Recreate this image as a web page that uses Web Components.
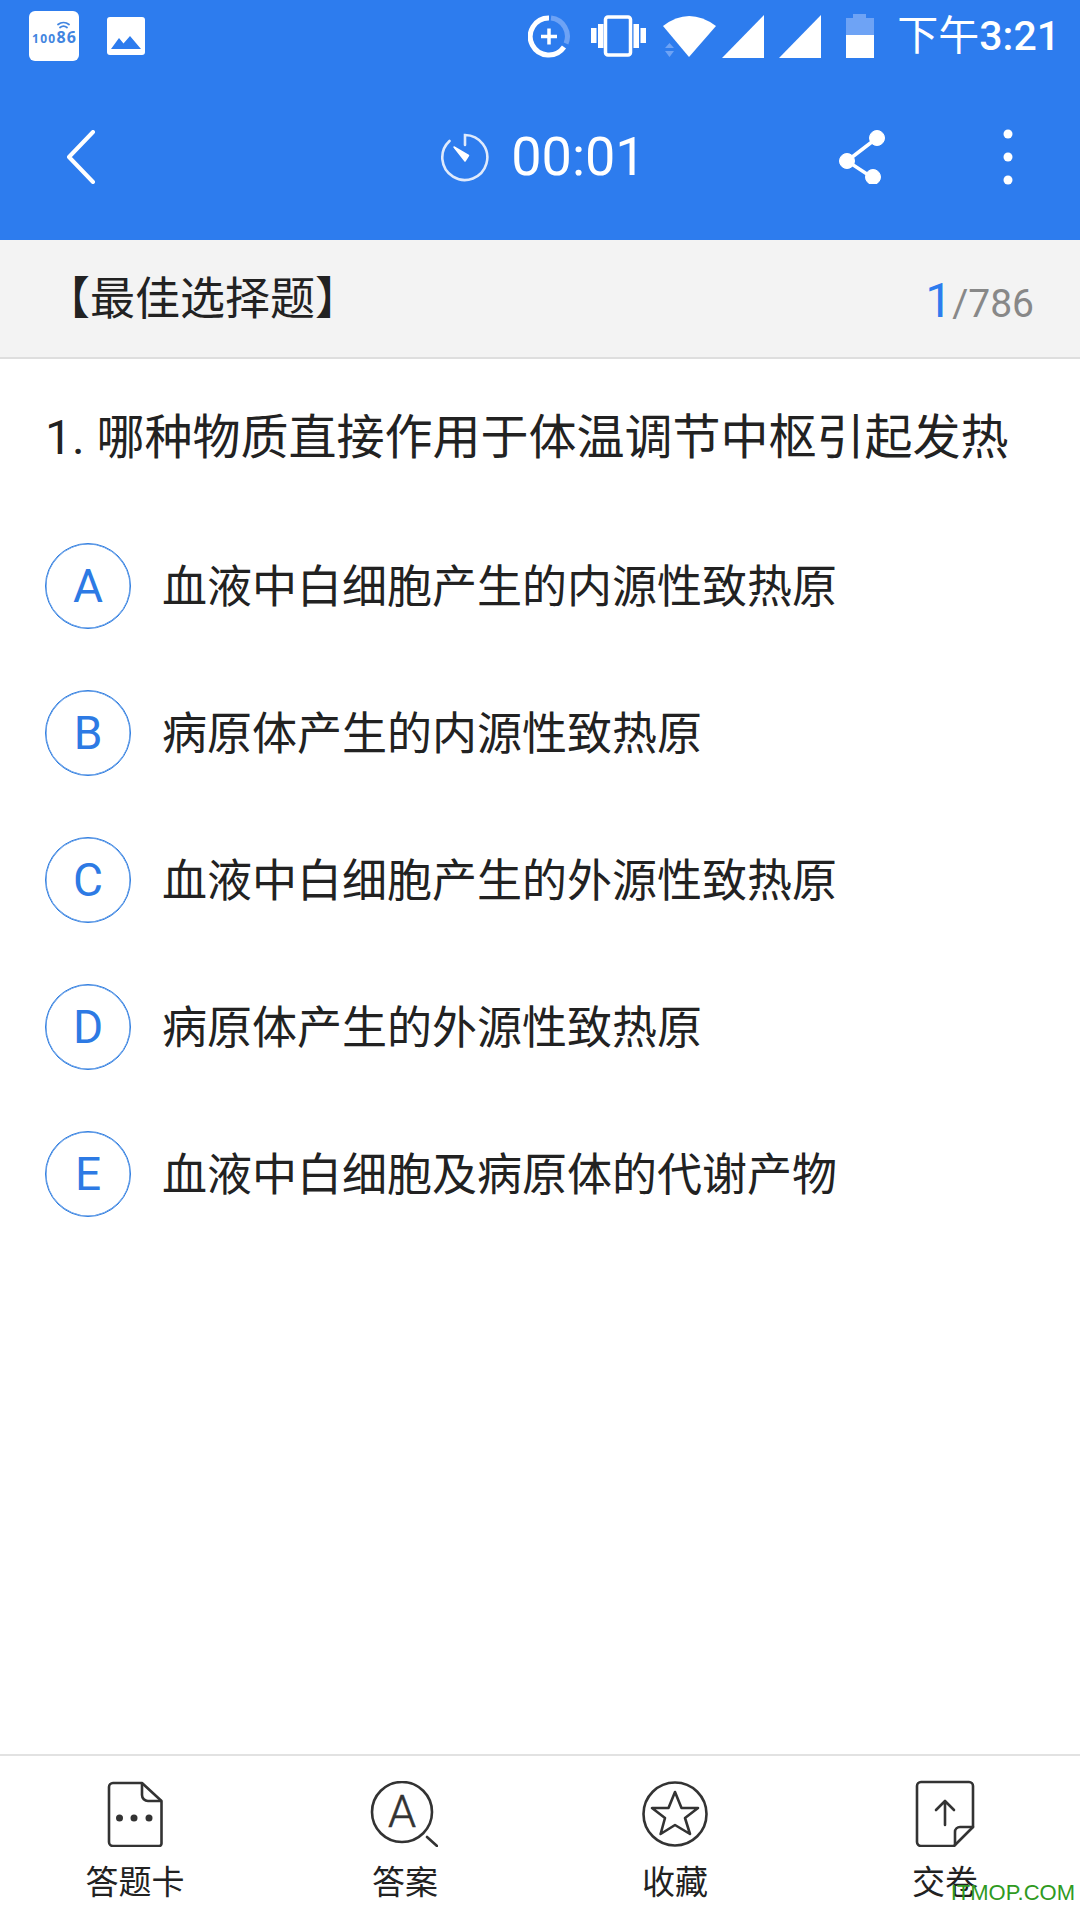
<!DOCTYPE html>
<html lang="zh-CN">
<head>
<meta charset="utf-8">
<title>最佳选择题</title>
<style>
    html, body { margin: 0; padding: 0; background: #fff; }
    body { font-family: Roboto, "Noto Sans CJK SC", sans-serif; color: #222; }
</style>
</head>
<body>
<exam-page>
    <status-bar></status-bar>
    <exam-toolbar time="00:01"></exam-toolbar>
    <section-head current="1" total="/786">【最佳选择题】</section-head>
    <question-block>
        <span slot="question">1. 哪种物质直接作用于体温调节中枢引起发热</span>
        <answer-option letter="A">血液中白细胞产生的内源性致热原</answer-option>
        <answer-option letter="B">病原体产生的内源性致热原</answer-option>
        <answer-option letter="C">血液中白细胞产生的外源性致热原</answer-option>
        <answer-option letter="D">病原体产生的外源性致热原</answer-option>
        <answer-option letter="E">血液中白细胞及病原体的代谢产物</answer-option>
    </question-block>
    <bottom-bar>
        <bottom-tab>
            <svg slot="icon" width="56" height="66" viewBox="0 0 56 66" fill="none" stroke="#333" stroke-width="2.6" stroke-linejoin="round">
                <path d="M35 2H6a4 4 0 0 0-4 4v55a4 4 0 0 0 4 4h46a2.500 2.500 0 0 0 2.500-2.500V20Z"/>
                <path d="M35 2v12a6 6 0 0 0 6 6h13.500"/>
                <circle cx="12.500" cy="37" r="3.500" fill="#333" stroke="none"/>
                <circle cx="27" cy="37" r="3.500" fill="#333" stroke="none"/>
                <circle cx="42" cy="37" r="3.500" fill="#333" stroke="none"/>
            </svg>
            答题卡
        </bottom-tab>
        <bottom-tab>
            <svg slot="icon" width="68" height="66" viewBox="0 0 68 66" fill="none" stroke="#333" stroke-width="2.6" stroke-linecap="round" style="margin-left:-2px">
                <circle cx="32" cy="31" r="30"/>
                <path d="M57 56 67 65"/>
                <text x="32" y="46" text-anchor="middle" font-family="Roboto" font-weight="300" font-size="45" fill="#333" stroke="#333" stroke-width="0.5">A</text>
            </svg>
            答案
        </bottom-tab>
        <bottom-tab>
            <svg slot="icon" width="66" height="66" viewBox="0 0 66 66" fill="none" stroke="#333" stroke-width="2.6" stroke-linejoin="round">
                <circle cx="33" cy="33" r="31.500"/>
                <path d="M33 11 39.500 27H56L43 37 48 53 33 44 18.600 53 23 37 10 27H26.500Z"/>
            </svg>
            收藏
        </bottom-tab>
        <bottom-tab>
            <svg slot="icon" width="60" height="67" viewBox="0 0 60 67" fill="none" stroke="#333" stroke-width="2.6" stroke-linejoin="round" stroke-linecap="round">
                <path d="M6 2H54a4 4 0 0 1 4 4V47L39 66H6a4 4 0 0 1-4-4V6a4 4 0 0 1 4-4Z"/>
                <path d="M58 47H45a5 5 0 0 0-5 5V65"/>
                <path d="M30 45V21M21 30l9-9 9 9"/>
            </svg>
            交卷
        </bottom-tab>
    </bottom-bar>
    <site-mark>ITMOP.COM</site-mark>
</exam-page>

<script>
class ExamPage extends HTMLElement {
    constructor() {
        super();
        this.attachShadow({ mode: "open" });
    }

    connectedCallback() {
        this.shadowRoot.innerHTML = `
            <style>
                :host {
                    display: flex;
                    flex-direction: column;
                    position: relative;
                    width: 1080px;
                    height: 1920px;
                    overflow: hidden;
                    background: #fff;
                }
            </style>
            <slot></slot>
        `;
    }
}

class StatusBar extends HTMLElement {
    constructor() {
        super();
        this.attachShadow({ mode: "open" });
    }

    connectedCallback() {
        this.shadowRoot.innerHTML = `
            <style>
                :host {
                    display: flex;
                    justify-content: space-between;
                    align-items: center;
                    height: 72px;
                    padding: 0 20px 0 29px;
                    background: #2d7cee;
                    color: #fff;
                }
                .left, .right { display: flex; align-items: center; }
                .left { gap: 28px; }
                svg { display: block; }
                .vib { margin-left: 21px; }
                .wifi { margin-left: 17px; }
                .sig1 { margin-left: 6px; }
                .sig2 { margin-left: 15px; }
                .bat { margin-left: 25px; }
                .time {
                    margin-left: 23px;
                    font-size: 41px;
                    line-height: 48px;
                    white-space: nowrap;
                }
                .time b { font-weight: 500; font-size: 41px; }
            </style>
            <div class="left">
                <!-- icono 10086 -->
                <svg width="50" height="50" viewBox="0 0 50 50">
                    <rect width="50" height="50" rx="6" fill="#fff"/>
                    <text x="3" y="32" font-family="'Open Sans'" font-weight="700" fill="#4285e0" font-size="12" textLength="44"><tspan>100</tspan><tspan font-size="16">86</tspan></text>
                    <g fill="none" stroke="#4285e0" stroke-width="1.800" stroke-linecap="round">
                        <path d="M29 13.500a9 9 0 0 1 11 0"/>
                        <path d="M31 16.500a5.500 5.500 0 0 1 7 0"/>
                    </g>
                </svg>
                <svg width="38" height="38" viewBox="0 0 38 38">
                    <rect width="38" height="38" rx="3" fill="#fff"/>
                    <path d="M4 32 12 21 16.500 26.500 23 19 34 32Z" fill="#2d7cee"/>
                </svg>
            </div>
            <div class="right">
                <svg width="42" height="43" viewBox="0 0 42 43" fill="none" stroke-width="5">
                    <path d="M21 3A18.500 18.500 0 1 0 36 32" stroke="#fff"/>
                    <path d="M23 3.100A18.500 18.500 0 0 1 38 28.500" stroke="#6ea3f5"/>
                    <path d="M21 13.500V29.500M13 21.500H29" stroke="#fff" stroke-width="3.500"/>
                </svg>
                <svg class="vib" width="55" height="42" viewBox="0 0 55 42" fill="#fff">
                    <rect x="14.500" y="2" width="25" height="38" rx="2.500" fill="none" stroke="#fff" stroke-width="3.500"/>
                    <rect x="0" y="13" width="5.500" height="15"/>
                    <rect x="7" y="9" width="5.500" height="24"/>
                    <rect x="42.500" y="9" width="5.500" height="24"/>
                    <rect x="49.500" y="13" width="5.500" height="15"/>
                </svg>
                <svg class="wifi" width="53" height="42" viewBox="0 0 53 42" fill="#fff">
                    <path d="M0 11Q26-9 53 11L26 42Z"/>
                    <path d="M2 33H11L6.500 28ZM2 36H11L6.500 42Z" fill="#6ea3f5"/>
                </svg>
                <svg class="sig1" width="42" height="43" viewBox="0 0 42 43"><path d="M0 43H42V0Z" fill="#fff"/></svg>
                <svg class="sig2" width="42" height="43" viewBox="0 0 42 43"><path d="M0 43H42V0Z" fill="#fff"/></svg>
                <svg class="bat" width="28" height="44" viewBox="0 0 28 44">
                    <path d="M7 0H20V4H28V21H0V4H7Z" fill="#6ea3f5"/>
                    <rect y="21" width="28" height="23" fill="#fff"/>
                </svg>
                <span class="time">下午<b>3:21</b></span>
            </div>
        `;
    }
}

class ExamToolbar extends HTMLElement {
    constructor() {
        super();
        this.attachShadow({ mode: "open" });
    }

    connectedCallback() {
        const time = this.getAttribute("time");
        this.shadowRoot.innerHTML = `
            <style>
                :host {
                    display: grid;
                    grid-template-columns: 1fr auto 1fr;
                    align-items: center;
                    height: 168px;
                    padding: 2px 67px 0 66px;
                    box-sizing: border-box;
                    background: #2d7cee;
                    color: #fff;
                }
                svg { display: block; }
                .timer { display: flex; align-items: center; gap: 22px; transform: translateX(3.5px); }
                .time { font-size: 54px; font-weight: 400; line-height: 60px; }
                .actions { display: flex; justify-content: flex-end; align-items: center; gap: 118px; }
            </style>
            <svg width="30" height="54" viewBox="0 0 30 54" fill="none" stroke="#fff" stroke-width="4" stroke-linecap="round" stroke-linejoin="round">
                <path d="M27 2 3 27 27 52"/>
            </svg>
            <div class="timer">
                <svg width="49" height="49" viewBox="0 0 49 49" fill="none" stroke="#dfeafc" stroke-width="2.600" stroke-linecap="round">
                    <path d="M24.500 12V2A22.500 22.500 0 1 1 9 8"/>
                    <path d="M13.500 14 28 22.500 24.500 28Z" fill="#fff" stroke="#fff" stroke-width="1.500" stroke-linejoin="round"/>
                </svg>
                <span class="time">${time}</span>
            </div>
            <div class="actions">
                <svg width="46" height="54" viewBox="0 0 46 54" fill="#fff" stroke="#fff">
                    <path d="M38 8 8 31 34 48" fill="none" stroke-width="3.500"/>
                    <circle cx="38" cy="8" r="7.500"/>
                    <circle cx="8" cy="31" r="7.500"/>
                    <circle cx="34" cy="47" r="7.500"/>
                </svg>
                <svg width="10" height="56" viewBox="0 0 10 56" fill="#fff">
                    <circle cx="5" cy="5" r="4.500"/>
                    <circle cx="5" cy="28" r="4.500"/>
                    <circle cx="5" cy="51" r="4.500"/>
                </svg>
            </div>
        `;
    }
}

class SectionHead extends HTMLElement {
    constructor() {
        super();
        this.attachShadow({ mode: "open" });
    }

    connectedCallback() {
        const current = this.getAttribute("current");
        const total = this.getAttribute("total");
        this.shadowRoot.innerHTML = `
            <style>
                :host {
                    display: flex;
                    justify-content: space-between;
                    align-items: center;
                    height: 119px;
                    padding: 2px 46px 0 45px;
                    box-sizing: border-box;
                    background: #f3f3f3;
                    border-bottom: 2px solid #dedede;
                    color: #222;
                }
                .title { font-size: 45px; line-height: 60px; }
                .count { font-weight: 400; color: #888; font-size: 39px; line-height: 60px; margin-top: 5px; }
                .count b { font-weight: 400; color: #2d7cee; font-size: 48px; }
            </style>
            <span class="title"><slot></slot></span>
            <span class="count"><b>${current}</b>${total}</span>
        `;
    }
}

class QuestionBlock extends HTMLElement {
    constructor() {
        super();
        this.attachShadow({ mode: "open" });
    }

    connectedCallback() {
        this.shadowRoot.innerHTML = `
            <style>
                :host {
                    display: block;
                    flex: 1;
                    padding: 49px 45px 0;
                }
                .question {
                    font-size: 48px;
                    line-height: 60px;
                    color: #222;
                    white-space: nowrap;
                }
                .options {
                    display: flex;
                    flex-direction: column;
                    gap: 61px;
                    margin-top: 75px;
                }
            </style>
            <div class="question"><slot name="question"></slot></div>
            <div class="options"><slot></slot></div>
        `;
    }
}

class AnswerOption extends HTMLElement {
    constructor() {
        super();
        this.attachShadow({ mode: "open" });
    }

    connectedCallback() {
        const letter = this.getAttribute("letter");
        this.shadowRoot.innerHTML = `
            <style>
                :host {
                    display: flex;
                    align-items: center;
                    gap: 31px;
                    height: 86px;
                }
                .letter {
                    flex: none;
                    display: flex;
                    align-items: center;
                    justify-content: center;
                    width: 86px;
                    height: 86px;
                    box-sizing: border-box;
                    border: 1px solid #2f7de0;
                    box-shadow: inset 0 0 0 0.5px #2f7de0;
                    border-radius: 50%;
                    color: #2d7ae4;
                    font-size: 46px;
                    font-weight: 400;
                }
                .text { font-size: 45px; line-height: 60px; color: #222; padding-top: 3px; }
            </style>
            <span class="letter">${letter}</span>
            <span class="text"><slot></slot></span>
        `;
    }
}

class BottomBar extends HTMLElement {
    constructor() {
        super();
        this.attachShadow({ mode: "open" });
    }

    connectedCallback() {
        this.shadowRoot.innerHTML = `
            <style>
                :host {
                    display: grid;
                    grid-template-columns: repeat(4, 1fr);
                    height: 166px;
                    box-sizing: border-box;
                    border-top: 2px solid #e2e2e2;
                    background: #fff;
                }
            </style>
            <slot></slot>
        `;
    }
}

class BottomTab extends HTMLElement {
    constructor() {
        super();
        this.attachShadow({ mode: "open" });
    }

    connectedCallback() {
        this.shadowRoot.innerHTML = `
            <style>
                :host {
                    display: flex;
                    flex-direction: column;
                    align-items: center;
                    padding-top: 24px;
                    color: #222;
                    font-size: 33px;
                }
                .icon { display: flex; align-items: center; justify-content: center; height: 67px; }
                .label { margin-top: 16px; line-height: 40px; }
            </style>
            <div class="icon"><slot name="icon"></slot></div>
            <div class="label"><slot></slot></div>
        `;
    }
}

class SiteMark extends HTMLElement {
    constructor() {
        super();
        this.attachShadow({ mode: "open" });
    }

    connectedCallback() {
        this.shadowRoot.innerHTML = `
            <style>
                /* marca de agua encima de la barra inferior */
                :host {
                    position: absolute;
                    right: 5px;
                    bottom: 15px;
                    font-family: "Liberation Sans", sans-serif;
                    font-size: 22px;
                    line-height: 24px;
                    color: #2f9a1f;
                }
            </style>
            <slot></slot>
        `;
    }
}

customElements.define("exam-page", ExamPage);
customElements.define("status-bar", StatusBar);
customElements.define("exam-toolbar", ExamToolbar);
customElements.define("section-head", SectionHead);
customElements.define("question-block", QuestionBlock);
customElements.define("answer-option", AnswerOption);
customElements.define("bottom-bar", BottomBar);
customElements.define("bottom-tab", BottomTab);
customElements.define("site-mark", SiteMark);
</script>
</body>
</html>
